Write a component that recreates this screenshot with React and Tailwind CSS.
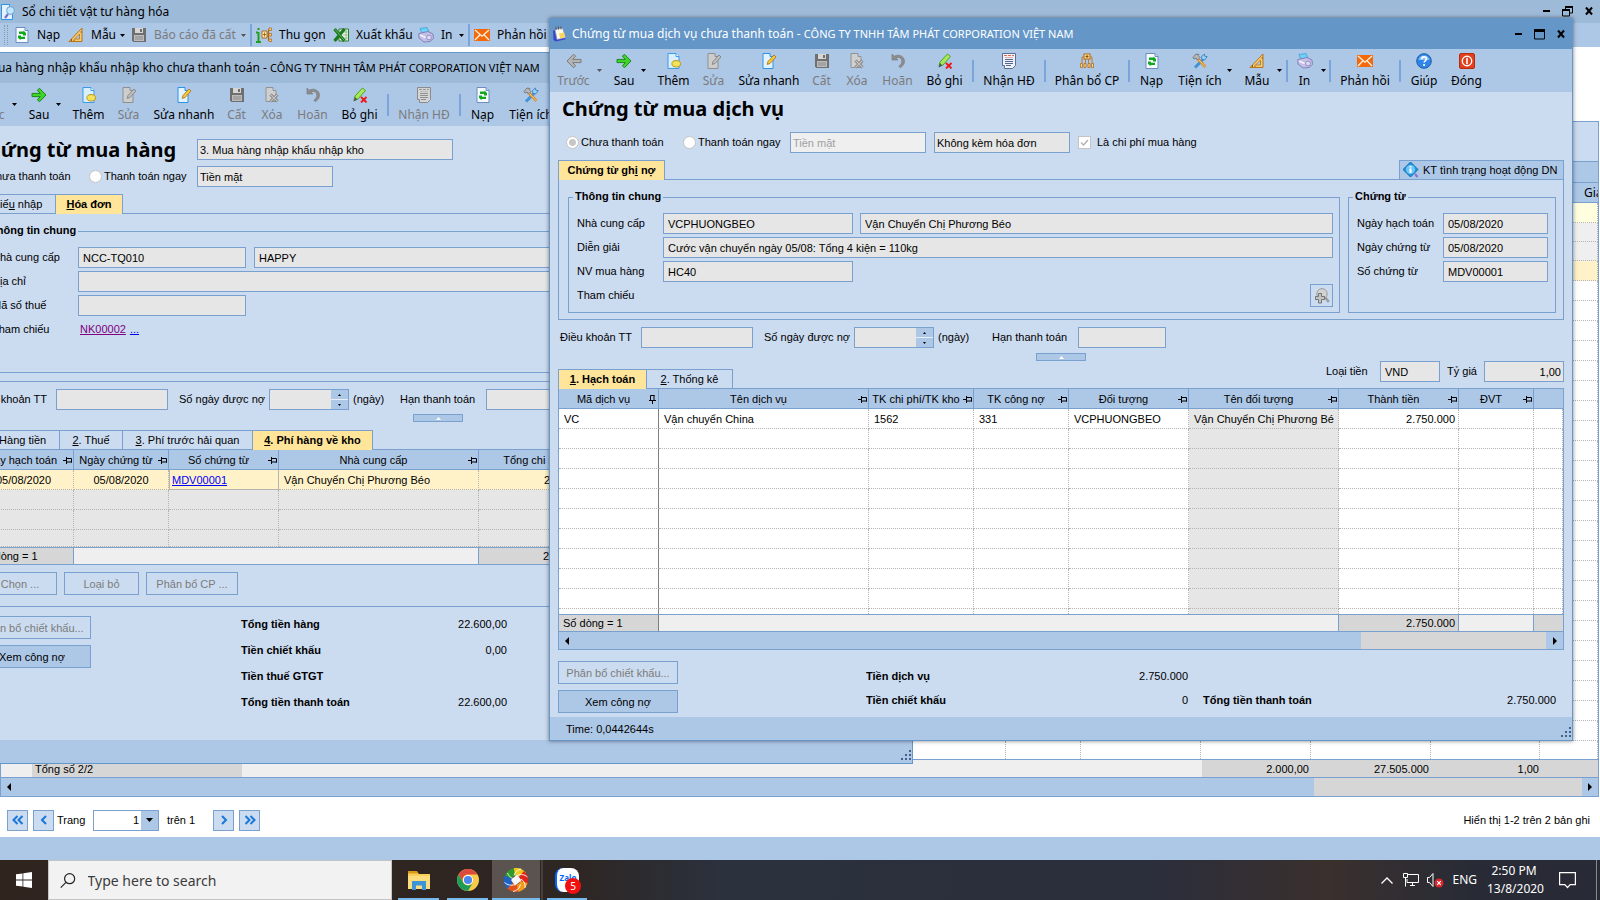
import React from "react";

const UI = "font-['Noto_Sans','Open_Sans',sans-serif]";
const BODY = "font-['Liberation_Sans',Arial,sans-serif]";

/* ---------- icons ---------- */

function Svg({ size = 16, children }) {
  return (
    <svg width={size} height={size} viewBox="0 0 16 16" aria-hidden="true" className="shrink-0">
      {children}
    </svg>
  );
}

const Caret = ({ muted }) => (
  <svg width="5" height="3" viewBox="0 0 5 3" aria-hidden="true" className="shrink-0">
    <path d="M0 0h5L2.500 3z" fill={muted ? "#555" : "#000"} />
  </svg>
);

const ArrowLeft = () => (
  <Svg>
    <path d="M7.600 1.200 1 8l6.600 6.800 2-2L6.700 9.600H15V6.400H6.700l2.900-3.200z" fill="#b4b4b4" stroke="#7c7c7c" strokeLinejoin="round" />
  </Svg>
);
const ArrowRight = () => (
  <Svg>
    <path d="M8.400 1.200 15 8l-6.600 6.800-2-2 2.900-3.200H1V6.400h8.300L6.400 3.200z" fill="#3fd32c" stroke="#1c8a14" strokeLinejoin="round" />
  </Svg>
);
const PageAdd = () => (
  <Svg>
    <path d="M2 .5h8l3 3v12H2z" fill="#d9efff" stroke="#3d9be6" />
    <path d="M10 .5v3h3" fill="#fff" stroke="#3d9be6" />
    <path d="M10 7v7M6.500 10.500h7.500M7.500 8l5.500 5M13 8l-5.500 5" stroke="#b89a1e" strokeWidth="1.500" />
    <ellipse cx="10.200" cy="10.800" rx="4.300" ry="3.200" fill="#f4e25a" stroke="#b89a1e" />
  </Svg>
);
const PageEdit = ({ muted }) => (
  <Svg>
    <path d="M2 .5h7v3h3v12H2z" fill={muted ? "#cdcdcd" : "#e2f3ff"} stroke={muted ? "#8f8f8f" : "#2f93e4"} />
    <path d="m7 8.500 6-6.500 2 2-6 6.500-2.800.9z" fill={muted ? "#bdbdbd" : "#fbc83c"} stroke={muted ? "#858585" : "#a8781d"} strokeWidth=".9" />
  </Svg>
);
const Save = () => (
  <Svg>
    <path d="M1 1h14v14H2.500L1 13.500z" fill="#6f6f6f" />
    <path d="M4 1h8v5H4z" fill="#d6d6d6" />
    <path d="M9 2h2v3H9z" fill="#6f6f6f" />
    <path d="M3 8h10v6H3z" fill="#bcbcbc" />
    <path d="M4 10h8M4 12h8" stroke="#8b8b8b" />
  </Svg>
);
const PageDelete = () => (
  <Svg>
    <path d="M2 .5h7v3h3v11H2z" fill="#cfcfcf" stroke="#929292" />
    <path d="m6.500 7.500 7 7M13.500 7.500l-7 7" stroke="#7d7d7d" strokeWidth="3" />
    <path d="m6.500 7.500 7 7M13.500 7.500l-7 7" stroke="#c4c4c4" strokeWidth="1.200" />
  </Svg>
);
const Undo = () => (
  <Svg>
    <path d="M2 1v6h6L5.800 5c3-1.500 6 .3 6 3.300 0 2-1 3.400-3 4.900l1.600 1.600C13 13 14.500 11 14.500 8.300c0-5-5.700-7.800-10.500-5z" fill="#8d8d8d" stroke="#777" strokeWidth=".6" />
  </Svg>
);
const Unpost = () => (
  <Svg>
    <path d="M2 13.500 3 9l7.500-8 3 2.500L6 12z" fill="#a5e85a" stroke="#4da51d" />
    <path d="M1.500 14.500 3 10l2.500 2.500z" fill="#555" />
    <path d="m9 10 5.500 5.500M14.500 10 9 15.500" stroke="#f01414" strokeWidth="1.800" />
  </Svg>
);
const Invoice = ({ muted }) => (
  <Svg>
    <path d="M1.500.5h13v12l-3 3h-8v-3h-2z" fill={muted ? "#d5d5d5" : "#eef3fb"} stroke={muted ? "#8b8b8b" : "#5b6f95"} />
    <path d="M3 2.500h10" stroke={muted ? "#999" : "#e2664f"} strokeDasharray="3 1" />
    <path d="M4 4.500h8" stroke={muted ? "#bbb" : "#f0a595"} />
    <path d="M4 6.500h8M4 8.500h8M4 10.500h8M5 12.500h5" stroke={muted ? "#8f8f8f" : "#52678f"} />
  </Svg>
);
const Allocate = () => (
  <Svg>
    <rect x="5" y="1" width="6" height="5" fill="#ffe08a" stroke="#b0691c" />
    <path d="M8 2v3M6.500 3.500h3" stroke="#8a4d10" />
    <path d="M5 4H3v6M11 4h2v6M6.500 6v4M9.500 6v4" fill="none" stroke="#c47a2b" />
    <path d="M1.500 10.500h2v4h-2zM5 10.500h2v4H5zM9 10.500h2v4H9zM12.500 10.500h2v4h-2z" fill="#fbd98e" stroke="#b0691c" strokeWidth=".8" />
  </Svg>
);
const Refresh = () => (
  <Svg>
    <path d="M2 .5h9l3 3v12H2z" fill="#f5fbff" stroke="#6d8dbd" />
    <path d="M11 .5v3h3" fill="#c6dbf4" stroke="#6d8dbd" />
    <path d="M5 4.500h4.500V3.500L12 6v2.500H9V7H5zM11 12H6.500v1.200L4 10.700V8.500h3v1.300h4z" fill="#11a81c" />
  </Svg>
);
const Tools = () => (
  <Svg>
    <path d="m3 14.500 8-8" stroke="#3f93d8" strokeWidth="3" />
    <path d="M10 6.500 9.500 3.500l3-2.500.3 2.300 2.400.3-2.200 3.200z" fill="#9bd1f7" stroke="#2d7ab8" strokeWidth=".8" />
    <path d="m5 5 8.500 9" stroke="#d28a2c" strokeWidth="2.600" />
    <path d="m5.500 5.500 8 8.500" stroke="#f8cf7c" />
    <path d="M1 4.500 4 1l3 .5-.8 1L8 4.500 5.500 7 4 5 2 6z" fill="#b9b9b9" stroke="#6a6a6a" strokeWidth=".8" />
  </Svg>
);
const SetSquare = () => (
  <Svg>
    <path d="M14 1v13.500H1z" fill="#f9c86a" stroke="#b5761b" strokeLinejoin="round" />
    <path d="M11.500 7v5H6.500z" fill="#adc7e7" stroke="#b5761b" strokeWidth=".8" />
    <path d="M3.500 14v-2M6 14v-1.500M12.500 5H14" stroke="#8a5710" />
  </Svg>
);
const Printer = () => (
  <Svg>
    <path d="M2 1.500 9 .5l2 4.800-7 1z" fill="#6fd0f8" stroke="#3aa1d6" strokeWidth=".8" />
    <path d="M.8 6.500 10 4.500l5 2.500.5 4.500-3.500 3L6 15l-5-4z" fill="#c3bfe6" stroke="#7d7ab5" strokeWidth=".9" />
    <path d="m2 8 5.500 2.500" stroke="#f3f2ff" strokeWidth="1.500" />
    <circle cx="11" cy="10.500" r="2.400" fill="#dedcf5" stroke="#8582bb" strokeWidth=".8" />
  </Svg>
);
const Mail = () => (
  <Svg>
    <rect x="0" y="2" width="16" height="12" fill="#f4690b" />
    <path d="m1 3 7 6.200L15 3M1 13l5-5.300M15 13l-5-5.300" fill="none" stroke="#fff2df" strokeWidth="1.300" />
  </Svg>
);
const Help = () => (
  <Svg>
    <circle cx="8" cy="8" r="7.300" fill="#2f86e8" stroke="#1c5ea8" />
    <path d="M2.500 7a5.600 5.600 0 0 1 11 0z" fill="#7fbcf8" />
    <path d="M5.800 6.200C5.800 3 10.400 3.200 10.400 6c0 1.800-2.300 1.800-2.300 3.600" fill="none" stroke="#fff" strokeWidth="1.600" />
    <circle cx="8.100" cy="12" r="1.100" fill="#fff" />
  </Svg>
);
const Power = () => (
  <Svg>
    <rect x=".5" y=".5" width="15" height="15" rx="1.500" fill="#e2401c" stroke="#b52c10" />
    <circle cx="8" cy="8" r="4.700" fill="none" stroke="#fff" strokeWidth="1.400" />
    <path d="M8 5v6" stroke="#fff" strokeWidth="1.600" />
  </Svg>
);
const Collapse = () => (
  <Svg>
    <path d="M2.500 1v2M2.500 5v10M0 15h5M0 5.500h2" stroke="#1fa01f" strokeWidth="2" />
    <path d="M6 4h5v7H6z" fill="#ffe9ac" stroke="#b0691c" />
    <path d="M8.500 5.500v4M7 7.500h3M11 6h2M11 9h2M12.500 2v12" stroke="#b0691c" />
    <path d="M13 1h2.500v2.500H13zM13 6.500h2.500V9H13zM13 12h2.500v2.500H13z" fill="#fbd98e" stroke="#b0691c" strokeWidth=".8" />
  </Svg>
);
const Excel = () => (
  <Svg>
    <path d="M6 2h9.500v12H6z" fill="#eef6ec" stroke="#2a7d2c" />
    <path d="M10 5h5M10 8h5M10 11h5M13 2v12" stroke="#7db57e" strokeWidth=".8" />
    <path d="m1.500 2 10 12M11.500 2l-10 12" stroke="#1c7a20" strokeWidth="3.200" />
    <path d="m2 2.200 9.500 11.500" stroke="#6cc06e" strokeWidth=".8" />
  </Svg>
);
const Report = () => (
  <Svg>
    <path d="M1.500.5h8v3h3v12h-11z" fill="#e2f3ff" stroke="#2f93e4" />
    <path d="m5 14 3-4" stroke="#7b6fc4" strokeWidth="2.200" />
    <circle cx="10.500" cy="6.500" r="3.900" fill="#bfe6fb" stroke="#6b9fd4" />
  </Svg>
);
const Notepad = () => (
  <Svg>
    <path d="M1 4.500 3.500 4l2 9 8-1.500v1.800L4 15.500 1.500 14z" fill="#3d46c8" />
    <path d="m3 3.500 7.500-1.500 3 9.500-8.500 2z" fill="#fffbe4" stroke="#8c95d8" strokeWidth=".7" />
    <path d="m7 7.500 5-1 1.300 4.500-5 1.400z" fill="#f9d65c" />
    <path d="M4 .8v3M6.500.6v3M9 .4v3" stroke="#555" />
  </Svg>
);
const Magnify = () => (
  <Svg>
    <circle cx="8" cy="5.800" r="5.200" fill="#d2d2d2" stroke="#9c9c9c" />
    <path d="m11.300 9.500 3.500 4.500" stroke="#9c9c9c" strokeWidth="2.600" />
    <path d="M4.500 5.500h3v3h3v3h-3v3.500h-3v-3.500H1.500v-3h3z" fill="#c4c4c4" stroke="#6b6b6b" strokeWidth=".9" />
  </Svg>
);
const Company = () => (
  <Svg>
    <path d="m7.500 0 7.500 7.500L7.500 15 0 7.500z" fill="#1f93dd" stroke="#0f6db0" />
    <circle cx="7.500" cy="7.500" r="4.600" fill="#6cc6f7" />
    <path d="M7.500 4v1.500M7.500 6.500V11" stroke="#fff" strokeWidth="2" />
    <path d="m12 12 2.500 3" stroke="#8b6fd0" strokeWidth="2" />
  </Svg>
);
const Pin = ({ vertical }) => (
  <svg width="9" height="9" viewBox="0 0 9 9" aria-hidden="true" className={vertical ? "shrink-0 -rotate-90" : "shrink-0"}>
    <path d="M0 4.500h3M3.500 1v7M4 2.500h4.500v4M4 6h5" fill="none" stroke="#000" />
  </svg>
);
const TriLeft = () => (
  <svg width="4" height="8" viewBox="0 0 4 8" aria-hidden="true"><path d="M4 0v8L0 4z" /></svg>
);
const TriRight = () => (
  <svg width="4" height="8" viewBox="0 0 4 8" aria-hidden="true"><path d="M0 0v8l4-4z" /></svg>
);
const Grip = () => (
  <svg width="12" height="12" viewBox="0 0 12 12" aria-hidden="true" className="absolute right-0 bottom-px">
    <path d="M9 0h2v2H9zM5 4h2v2H5zM9 4h2v2H9zM1 8h2v2H1zM5 8h2v2H5zM9 8h2v2H9z" fill="#42618f" />
  </svg>
);

/* ---------- shared controls ---------- */

const field = "h-[21px] min-w-0 border border-[#7aa0d0] bg-[#e6e6e6] px-1 text-[11px] text-black outline-none";

function Field({ label, value = "", className = "", align = "" }) {
  return <input aria-label={label} readOnly defaultValue={value} className={`${field} ${align} ${className}`} />;
}

function Radio({ name, label, checked, disabled }) {
  return (
    <label className="flex items-center gap-0.5 whitespace-nowrap">
      <input
        type="radio"
        name={name}
        defaultChecked={checked}
        disabled={disabled}
        className="size-[13px] shrink-0 appearance-none rounded-full border border-[#c4c4c4] bg-white checked:bg-[radial-gradient(circle,#c6c6c6_3px,#fff_4px)]"
      />
      {label}
    </label>
  );
}

function Tool({ icon, label, muted, className }) {
  return (
    <button type="button" className={`flex h-full shrink-0 flex-col items-center pt-1 text-[12px] leading-4 whitespace-nowrap ${muted ? "text-[#7b7b7b]" : "text-black"} ${className}`}>
      {icon}
      <span className="mt-1">{label}</span>
    </button>
  );
}
const Drop = ({ label, muted, w = "w-[10px]" }) => (
  <button type="button" aria-label={label} className={`flex h-full shrink-0 items-center ${w}`}>
    <Caret muted={muted} />
  </button>
);
const Sep = () => <span className="h-[22px] w-0.5 shrink-0 bg-[#7ba5da]" />;

function VoucherTools({ full }) {
  return (
    <div className={`flex h-[43px] items-center overflow-hidden bg-[#adc7e7] ${UI}`}>
      <Tool icon={<ArrowLeft />} label="Trước" muted className="w-[47px]" />
      <Drop label="Chọn chứng từ trước" muted={full} />
      <Tool icon={<ArrowRight />} label="Sau" className="w-[34px]" />
      <Drop label="Chọn chứng từ sau" />
      <Tool icon={<PageAdd />} label="Thêm" className="w-[45px]" />
      <Tool icon={<PageEdit muted />} label="Sửa" muted className="w-[35px]" />
      <Tool icon={<PageEdit />} label="Sửa nhanh" className="w-[76px]" />
      <Tool icon={<Save />} label="Cất" muted className="w-[29px]" />
      <Tool icon={<PageDelete />} label="Xóa" muted className="w-[42px]" />
      <Tool icon={<Undo />} label="Hoãn" muted className="w-[39px]" />
      <Tool icon={<Unpost />} label="Bỏ ghi" className="w-[55px]" />
      <Sep />
      <Tool icon={<Invoice muted={!full} />} label="Nhận HĐ" muted={!full} className="w-[70px]" />
      <Sep />
      {full && <Tool icon={<Allocate />} label="Phân bổ CP" className="w-[82px]" />}
      {full && <Sep />}
      <Tool icon={<Refresh />} label="Nạp" className="w-[43px]" />
      <Tool icon={<Tools />} label="Tiện ích" className="w-[54px]" />
      {full && (
        <>
          <Drop label="Chọn tiện ích" />
          <Tool icon={<SetSquare />} label="Mẫu" className="w-[40px]" />
          <Drop label="Chọn mẫu" w="w-[9px]" />
          <Sep />
          <Tool icon={<Printer />} label="In" className="w-[33px]" />
          <Drop label="Chọn mẫu in" w="w-[8px]" />
          <Sep />
          <Tool icon={<Mail />} label="Phản hồi" className="w-[68px]" />
          <Sep />
          <Tool icon={<Help />} label="Giúp" className="w-[46px]" />
          <Tool icon={<Power />} label="Đóng" className="w-[39px]" />
        </>
      )}
    </div>
  );
}

const CompanyName = () => <span className="text-[11px]">CÔNG TY TNHH TÂM PHÁT CORPORATION VIỆT NAM</span>;

function Group({ title, className = "", children }) {
  return (
    <fieldset className={`min-w-0 border border-[#7aa0d0] px-2 pt-2 ${className}`}>
      <legend className="-ml-1 px-0.5 pb-0.5 text-[11px] leading-[14px] font-bold">{title}</legend>
      {children}
    </fieldset>
  );
}

function PaymentTerms({ dueGap }) {
  return (
    <div className="mt-[7px] flex h-[21px] items-center pl-0.5 whitespace-nowrap">
      <label className="flex items-center"><span className="w-[81px]">Điều khoản TT</span><input readOnly className={`${field} w-[112px]`} /></label>
      <label className="ml-[11px] flex items-center"><span className="w-[90px]">Số ngày được nợ</span><input readOnly className={`${field} w-[62px] border-r-0`} /></label>
      <span className="flex h-[21px] w-[18px] flex-col gap-px border border-l-0 border-[#7aa0d0] bg-[#e8eff8]">
        <button type="button" aria-label="Tăng số ngày" className="flex flex-1 items-center justify-center bg-[#adc7e7]">
          <svg width="3" height="2" viewBox="0 0 3 2"><path d="M0 2h3L1.500 0z" /></svg>
        </button>
        <button type="button" aria-label="Giảm số ngày" className="flex flex-1 items-center justify-center bg-[#adc7e7]">
          <svg width="3" height="2" viewBox="0 0 3 2"><path d="M0 0h3L1.500 2z" /></svg>
        </button>
      </span>
      <span className={`pl-1 ${dueGap}`}>(ngày)</span>
      <label className="flex items-center"><span className="w-[86px]">Hạn thanh toán</span><input readOnly className={`${field} w-[88px]`} /></label>
    </div>
  );
}

const CollapseBar = ({ className }) => (
  <button type="button" aria-label="Thu gọn vùng thông tin" className={`flex h-2 w-[50px] items-center justify-center border border-[#7aa0d0] bg-[#adc7e7] ${className}`}>
    <svg width="5" height="3" viewBox="0 0 5 3"><path d="M0 3h5L2.500 0z" fill="#fff" /></svg>
  </button>
);

function Tab({ k, label, active, className }) {
  return (
    <button
      type="button"
      role="tab"
      aria-selected={!!active}
      className={`relative h-5 shrink-0 border border-[#7aa0d0] whitespace-nowrap not-first:border-l-0 ${active ? "z-10 border-b-0 bg-[#ffe599] font-bold" : "bg-[#cbdbf0]"} ${className}`}
    >
      {k && <u>{k}</u>}
      {label}
    </button>
  );
}

const btn = "flex h-[23px] items-center justify-center border border-[#7aa0d0] pt-px whitespace-nowrap";

function Th({ children, vertical, pin = true }) {
  return (
    <th className="h-5 overflow-hidden border-r border-b border-[#7aa0d0] bg-[#adc7e7] px-0 pt-px pb-0 leading-4 font-normal">
      <span className="flex items-center pr-px whitespace-nowrap">
        <span className="flex-1 text-center">{children}</span>
        {pin && <Pin vertical={vertical} />}
      </span>
    </th>
  );
}

const dotted = "overflow-hidden border-r border-b border-dotted border-[#b4b4b4] px-[5px] pt-px pb-0 leading-4 whitespace-nowrap";

function WindowButtons({ restored }) {
  return (
    <div className="ml-auto flex shrink-0 items-center gap-3">
      <button type="button" aria-label="Thu nhỏ"><svg width="7" height="11" viewBox="0 0 7 11"><path d="M0 4h7v2H0z" /></svg></button>
      <button type="button" aria-label="Phóng to">
        {restored ? (
          <svg width="11" height="11" viewBox="0 0 11 11"><path d="M3.500 3V1h7v6H8M.5 4h7v6h-7z" fill="none" stroke="#000" /><path d="M3 0h8v2H3zM0 3h8v2H0z" /></svg>
        ) : (
          <svg width="11" height="11" viewBox="0 0 11 11"><path d="M.5 1h10v9H.5z" fill="none" stroke="#000" /><path d="M0 0h11v3H0z" /></svg>
        )}
      </button>
      <button type="button" aria-label="Đóng cửa sổ"><svg width="8" height="11" viewBox="0 0 8 11"><path d="m1 1.500 6 7M7 1.500l-6 7" stroke="#000" strokeWidth="2" /></svg></button>
    </div>
  );
}

/* ---------- item ledger, fills the desktop ---------- */

const LEDGER_COLS = ["w-[1005px]", "w-[75px]", "w-[120px]", "w-[110px]", "w-[120px]", "w-[109px]", "w-auto"];

function LedgerTool({ icon, label, muted, className }) {
  return (
    <button type="button" className={`flex shrink-0 items-center gap-[7px] whitespace-nowrap ${muted ? "text-[#7b7b7b]" : ""} ${className}`}>
      {icon}
      {label}
    </button>
  );
}

function LedgerRow({ className = "h-5", cell = "" }) {
  return (
    <tr className={className}>
      {LEDGER_COLS.map((c, i) => (
        <td key={i} className={`border-r border-b border-dotted border-[#b4b4b4] p-0 ${cell}`} />
      ))}
    </tr>
  );
}

function Ledger() {
  return (
    <main className="flex min-h-0 flex-1 flex-col bg-white">
      <header className={`flex h-[23px] shrink-0 items-center bg-[#9dbad9] pr-[7px] text-[12px] ${UI}`}>
        <Report />
        <span className="ml-1.5">Sổ chi tiết vật tư hàng hóa</span>
        <WindowButtons restored />
      </header>
      <div className={`flex h-6 shrink-0 items-center bg-[#adc7e7] text-[12px] ${UI}`}>
        <span className="ml-1 h-5 w-1 border-x border-dotted border-[#8797ad]" />
        <LedgerTool icon={<Refresh />} label="Nạp" className="ml-1.5 w-[54px]" />
        <LedgerTool icon={<SetSquare />} label="Mẫu" className="w-[52px]" />
        <Drop label="Chọn mẫu" w="w-[11px]" />
        <LedgerTool icon={<Save />} label="Báo cáo đã cất" muted className="w-[110px]" />
        <Drop label="Chọn báo cáo" muted w="w-[9px]" />
        <Sep />
        <LedgerTool icon={<Collapse />} label="Thu gọn" className="ml-1 w-[77px]" />
        <LedgerTool icon={<Excel />} label="Xuất khẩu" className="w-[85px]" />
        <LedgerTool icon={<Printer />} label="In" className="w-[41px]" />
        <Drop label="Chọn mẫu in" w="w-[9px]" />
        <Sep />
        <LedgerTool icon={<Mail />} label="Phản hồi" className="ml-1" />
      </div>

      <div className="mt-[74px] mr-px flex min-h-0 flex-1 flex-col overflow-hidden border border-[#7aa0d0]">
        <div className="h-10 shrink-0 border-b border-[#7aa0d0] bg-[#cbdbf0]" />
        <div className="min-h-0 flex-1 overflow-hidden">
          <table className="w-full table-fixed border-separate border-spacing-0 text-[11px]">
            <colgroup>
              {LEDGER_COLS.map((c, i) => (
                <col key={i} className={c} />
              ))}
            </colgroup>
            <thead>
              <tr className="h-[21px]"><th colSpan={7} className="border-b border-[#7aa0d0] bg-[#adc7e7] p-0" /></tr>
              <tr className="h-5">
                <th colSpan={6} className="border-b border-[#7aa0d0] bg-[#adc7e7] p-0" />
                <th className={`overflow-hidden border-b border-[#7aa0d0] bg-[#adc7e7] py-0 pr-0 pl-11 text-left text-[12px] leading-4 font-normal whitespace-nowrap ${UI}`}>Giá</th>
              </tr>
            </thead>
            <tbody>
              <LedgerRow cell="bg-[#ffffdf]" />
              <LedgerRow className="h-[19px]" cell="bg-[#efefef]" />
              <LedgerRow className="h-[19px]" cell="bg-[#efefef]" />
              <LedgerRow cell="bg-[#fff2c8]" />
              {Array.from({ length: 24 }, (_, i) => (
                <LedgerRow key={i} />
              ))}
            </tbody>
          </table>
        </div>
        <div className="flex h-[19px] shrink-0 items-center border-y border-[#7aa0d0] bg-[#efefef] text-[11px]">
          <span className="ml-[31px] h-full w-[210px] bg-[#d6d6d6] pl-[3px] leading-[18px]">Tổng số 2/2</span>
          <span className="ml-auto flex h-full w-[396px] items-center bg-[#d6d6d6] pt-px text-right">
            <span className="w-[107px]">2.000,00</span>
            <span className="w-[120px]">27.505.000</span>
            <span className="w-[110px]">1,00</span>
          </span>
        </div>
        <div className="flex h-[18px] shrink-0 items-center bg-[#adc7e7]">
          <button type="button" aria-label="Cuộn trái" className="pl-1.5"><TriLeft /></button>
          <span className="ml-auto h-full w-[268px] bg-[#d6d6d6]" />
          <button type="button" aria-label="Cuộn phải" className="flex w-4 justify-center"><TriRight /></button>
        </div>
      </div>

      <nav className="flex h-10 shrink-0 items-center pt-1.5 pr-2.5 pl-[7px] text-[11px]">
        <PageButton label="Trang đầu" d="M7.500 3l-4 4 4 4M12.500 3l-4 4 4 4" />
        <PageButton label="Trang trước" d="M10 3 6 7l4 4" className="ml-[5px]" />
        <label className="ml-[3px] flex items-center">
          <span className="w-9">Trang</span>
          <span className="relative flex">
            <select className="h-[21px] w-[66px] appearance-none border border-[#7aa0d0] bg-white pr-[19px] text-right text-[11px] [text-align-last:right]">
              <option>1</option>
            </select>
            <span className="pointer-events-none absolute top-px right-px flex h-[19px] w-[17px] items-center justify-center bg-[#adc7e7]">
              <svg width="7" height="4" viewBox="0 0 7 4"><path d="M0 0h7L3.500 4z" /></svg>
            </span>
          </span>
        </label>
        <span className="ml-2 w-[46px]">trên 1</span>
        <PageButton label="Trang sau" d="m6 3 4 4-4 4" />
        <PageButton label="Trang cuối" d="m3.500 3 4 4-4 4M8.500 3l4 4-4 4" className="ml-[5px]" />
        <span className="ml-auto">Hiển thị 1-2 trên 2 bản ghi</span>
      </nav>
      <div className="h-[23px] shrink-0 bg-[#adc7e7]" />
    </main>
  );
}

function PageButton({ label, d, className = "" }) {
  return (
    <button type="button" aria-label={label} className={`flex size-[21px] items-center justify-center border border-[#7aa0d0] bg-[#cbdbf0] ${className}`}>
      <svg width="16" height="14" viewBox="0 0 16 14"><path d={d} fill="none" stroke="#1877d8" strokeWidth="2" /></svg>
    </button>
  );
}

/* ---------- import purchase voucher ---------- */

function ImportWindow() {
  return (
    <section className="absolute top-[52px] -left-9 w-[949px] border border-[#6496c8] bg-[#cbdbf0]">
      <header className={`flex h-[30px] items-center bg-[#9dbad9] pl-[22px] text-[12px] whitespace-nowrap ${UI}`}>
        <span>Mua hàng nhập khẩu nhập kho chưa thanh toán - <CompanyName /></span>
      </header>
      <VoucherTools />
      <div className="px-2 text-[11px]">
        <div className="mt-[13px] flex h-[21px] items-center">
          <h2 className={`w-[224px] pl-0.5 text-[20px] leading-7 font-bold whitespace-nowrap ${UI}`}>Chứng từ mua hàng</h2>
          <Field label="Loại chứng từ" value="3. Mua hàng nhập khẩu nhập kho" className="w-[256px] pl-0.5" />
        </div>
        <div className="mt-1.5 flex h-[21px] items-center">
          <span className="w-[116px]"><Radio name="pay-a" label="Chưa thanh toán" checked disabled /></span>
          <span className="w-[108px]"><Radio name="pay-a" label="Thanh toán ngay" disabled /></span>
          <Field label="Phương thức thanh toán" value="Tiền mặt" className="w-[136px] pl-0.5" />
        </div>
        <div role="tablist" className="relative mt-[7px] -mb-px flex">
          <Tab label={<>Phiế<u>u</u> nhập</>} className="w-[83px]" />
          <Tab k="H" label="óa đơn" active className="w-[67px]" />
        </div>
        <div className="border border-[#7aa0d0] px-[9px] pt-[9px] pb-2">
          <Group title="Thông tin chung" className="pb-[31px]">
            <div className="grid grid-cols-[86px_168px_1fr] items-center gap-y-[3px]">
              <span>Nhà cung cấp</span>
              <Field label="Mã nhà cung cấp" value="NCC-TQ010" />
              <Field label="Tên nhà cung cấp" value="HAPPY" className="ml-2" />
              <span>Địa chỉ</span>
              <Field label="Địa chỉ" className="col-span-2" />
              <span>Mã số thuế</span>
              <Field label="Mã số thuế" />
            </div>
            <div className="mt-0.5 flex h-[23px] items-center">
              <span className="w-[88px]">Tham chiếu</span>
              <a href="#nk00002" className="text-[#800080] underline">NK00002</a>
              <a href="#more" className="ml-1 text-[#0000ee] underline">...</a>
            </div>
          </Group>
        </div>
        <PaymentTerms dueGap="w-[51px]" />
        <CollapseBar className="mt-1 ml-[440px]" />
        <div role="tablist" className="relative mt-2 -mb-px flex">
          <Tab k="1" label=". Hàng tiền" className="w-[87px]" />
          <Tab k="2" label=". Thuế" className="w-[63px]" />
          <Tab k="3" label=". Phí trước hải quan" className="w-[130px]" />
          <Tab k="4" label=". Phí hàng về kho" active className="w-[120px]" />
        </div>
        <div className="overflow-hidden border border-[#7aa0d0]">
          <table className="w-full table-fixed border-separate border-spacing-0">
            <colgroup>
              <col className="w-[100px]" /><col className="w-[95px]" /><col className="w-[110px]" /><col className="w-[200px]" /><col className="w-[120px]" /><col />
            </colgroup>
            <thead>
              <tr><Th>Ngày hạch toán</Th><Th>Ngày chứng từ</Th><Th>Số chứng từ</Th><Th>Nhà cung cấp</Th><Th>Tổng chi phí</Th><Th /></tr>
            </thead>
            <tbody>
              <tr className="h-5 bg-[#fff2c8]">
                <td className={`${dotted} text-center`}>05/08/2020</td>
                <td className={`${dotted} text-center`}>05/08/2020</td>
                <td className="border border-t-0 border-[#b4b4b4] px-0.5 pt-px pb-0 leading-4"><a href="#mdv00001" className="text-[#0000ff] underline">MDV00001</a></td>
                <td className={dotted}>Vận Chuyển Chị Phương Béo</td>
                <td className={`${dotted} text-right`}>2.750.000</td>
                <td className={dotted} />
              </tr>
              {["h-5", "h-5", "h-[17px]"].map((h, i) => (
                <tr key={i} className={`${h} bg-[#e6e6e6]`}>
                  {[0, 1, 2, 3, 4, 5].map((c) => <td key={c} className={dotted} />)}
                </tr>
              ))}
            </tbody>
            <tfoot>
              <tr className="h-[17px] bg-[#efefef] leading-4">
                <td className="border-t border-r border-[#7aa0d0] bg-[#d6d6d6] px-1 py-0">Số dòng = 1</td>
                <td colSpan={3} className="border-t border-r border-[#7aa0d0] p-0" />
                <td className="border-t border-r border-[#7aa0d0] bg-[#d6d6d6] px-1.5 py-0 text-right">2.750.000</td>
                <td className="border-t border-[#7aa0d0] p-0" />
              </tr>
            </tfoot>
          </table>
        </div>
        <div className="mt-[7px] flex gap-[7px] text-[#7b7b7b]">
          <button type="button" className={`${btn} w-[84px] pl-2.5`}>Chọn ...</button>
          <button type="button" className={`${btn} w-[75px]`}>Loại bỏ</button>
          <button type="button" className={`${btn} w-[92px]`}>Phân bổ CP ...</button>
        </div>
        <div className="mt-[11px] flex h-[134px] border-t border-[#7aa0d0] pt-1">
          <div className="flex w-[268px] flex-col gap-1.5 pt-[5px]">
            <button type="button" className={`${btn} w-[118px] text-[#7b7b7b]`}>Phân bổ chiết khấu...</button>
            <button type="button" className={`${btn} w-[118px] bg-[#adc7e7]`}>Xem công nợ</button>
          </div>
          <dl className="grid w-[266px] auto-rows-[26px] grid-cols-2 items-center">
            <dt className="font-bold">Tổng tiền hàng</dt><dd className="text-right">22.600,00</dd>
            <dt className="font-bold">Tiền chiết khấu</dt><dd className="text-right">0,00</dd>
            <dt className="font-bold">Tiền thuế GTGT</dt><dd />
            <dt className="font-bold">Tổng tiền thanh toán</dt><dd className="text-right">22.600,00</dd>
          </dl>
        </div>
      </div>
      <footer className="relative h-[23px] bg-[#adc7e7]"><Grip /></footer>
    </section>
  );
}

/* ---------- service purchase voucher ---------- */

function ServiceWindow() {
  const blanks = ["h-5", "h-5", "h-5", "h-5", "h-5", "h-5", "h-5", "h-5", "h-5", "h-[5px]"];
  return (
    <section className="absolute top-[18px] right-[27px] left-[549px] border border-[#6496c8] bg-[#cbdbf0] shadow-[0_0_4px_rgba(0,0,0,0.5)]">
      <header className={`flex h-[30px] items-center bg-[#6496c8] pr-[7px] pl-0.5 text-[12px] whitespace-nowrap text-white ${UI}`}>
        <Notepad />
        <span className="ml-1">Chứng từ mua dịch vụ chưa thanh toán - <CompanyName /></span>
        <WindowButtons />
      </header>
      <VoucherTools full />
      <div className="px-2 pb-1 text-[11px]">
        <h1 className={`pb-0.5 pl-1 text-[20px] leading-[34px] font-bold ${UI}`}>Chứng từ mua dịch vụ</h1>
        <div className="mt-1 flex h-[21px] items-center pl-2">
          <span className="w-[117px]"><Radio name="pay-b" label="Chưa thanh toán" checked disabled /></span>
          <span className="w-[107px]"><Radio name="pay-b" label="Thanh toán ngay" disabled /></span>
          <input aria-label="Phương thức thanh toán" disabled defaultValue="Tiền mặt" className="h-[21px] w-[136px] border border-[#7aa0d0] bg-[#efefef] px-0.5 text-[11px] text-[#a0a0a0]" />
          <Field label="Hóa đơn" value="Không kèm hóa đơn" className="ml-2 w-[136px] pl-0.5" />
          <label className="ml-2 flex items-center gap-1.5">
            <span className="relative flex">
              <input type="checkbox" defaultChecked disabled className="size-[13px] appearance-none border border-[#c4c4c4] bg-white" />
              <svg width="13" height="13" viewBox="0 0 13 13" className="absolute inset-0"><path d="m3 6.500 2.500 2.500L10 4" fill="none" stroke="#b0b0b0" strokeWidth="1.300" /></svg>
            </span>
            Là chi phí mua hàng
          </label>
        </div>
        <div className="relative mt-[7px] -mb-px flex justify-between">
          <div role="tablist" className="flex">
            <Tab label={<>Chứng từ gh<u>i</u> nợ</>} active className="w-[107px]" />
          </div>
          <button type="button" className="flex h-5 w-[165px] items-center gap-1 border border-[#7aa0d0] bg-[#adc7e7] pl-[3px] whitespace-nowrap">
            <Company />
            KT tình trạng hoạt động DN
          </button>
        </div>
        <div className="flex gap-2 border border-[#7aa0d0] pt-[9px] pr-[7px] pb-1.5 pl-[9px]">
          <Group title="Thông tin chung" className="flex-1 pr-1.5 pb-[5px]">
            <div className="grid grid-cols-[86px_190px_1fr] items-center gap-y-[3px]">
              <span>Nhà cung cấp</span>
              <Field label="Mã nhà cung cấp" value="VCPHUONGBEO" />
              <Field label="Tên nhà cung cấp" value="Vận Chuyển Chị Phương Béo" className="ml-[7px]" />
              <span>Diễn giải</span>
              <Field label="Diễn giải" value="Cước vận chuyển ngày 05/08: Tổng 4 kiện = 110kg" className="col-span-2" />
              <span>NV mua hàng</span>
              <Field label="NV mua hàng" value="HC40" />
            </div>
            <div className="mt-0.5 flex h-[23px] items-center justify-between">
              <span>Tham chiếu</span>
              <button type="button" aria-label="Tìm chứng từ tham chiếu" className="flex size-[23px] items-center justify-center border border-[#7aa0d0]"><Magnify /></button>
            </div>
          </Group>
          <Group title="Chứng từ" className="w-[208px] pr-[7px]">
            <div className="grid grid-cols-[86px_1fr] items-center gap-y-[3px] whitespace-nowrap">
              <span>Ngày hạch toán</span><Field label="Ngày hạch toán" value="05/08/2020" />
              <span>Ngày chứng từ</span><Field label="Ngày chứng từ" value="05/08/2020" />
              <span>Số chứng từ</span><Field label="Số chứng từ" value="MDV00001" />
            </div>
          </Group>
        </div>
        <PaymentTerms dueGap="w-[58px]" />
        <CollapseBar className="mt-[5px] ml-[478px]" />
        <div className="relative -mb-px flex h-7 items-start whitespace-nowrap">
          <div role="tablist" className="flex self-end">
            <Tab k="1" label=". Hạch toán" active className="w-[89px]" />
            <Tab k="2" label=". Thống kê" className="w-[86px]" />
          </div>
          <label className="ml-auto flex items-center"><span className="w-[54px]">Loại tiền</span><input readOnly defaultValue="VND" className={`${field} w-[60px]`} /></label>
          <label className="ml-[7px] flex items-center"><span className="w-[37px]">Tỷ giá</span><input readOnly defaultValue="1,00" className={`${field} w-[80px] pr-0.5 text-right`} /></label>
        </div>
        <div className="border border-[#7aa0d0] bg-white">
          <table className="w-full table-fixed border-separate border-spacing-0">
            <colgroup>
              <col className="w-[100px]" /><col className="w-[210px]" /><col className="w-[105px]" /><col className="w-[95px]" /><col className="w-[120px]" /><col className="w-[150px]" /><col className="w-[120px]" /><col className="w-[75px]" /><col />
            </colgroup>
            <thead>
              <tr>
                <Th vertical>Mã dịch vụ</Th><Th>Tên dịch vụ</Th><Th>TK chi phí/TK kho</Th><Th>TK công nợ</Th><Th>Đối tượng</Th><Th>Tên đối tượng</Th><Th>Thành tiền</Th><Th>ĐVT</Th>
                <th className="border-b border-[#7aa0d0] bg-[#adc7e7] p-0" />
              </tr>
            </thead>
            <tbody>
              <tr className="h-5">
                <td className={`${dotted} border-r-[#808080] [border-right-style:solid]`}>VC</td>
                <td className={dotted}>Vận chuyển China</td>
                <td className={dotted}>1562</td>
                <td className={dotted}>331</td>
                <td className={dotted}>VCPHUONGBEO</td>
                <td className={`${dotted} bg-[#e6e6e6]`}>Vận Chuyển Chị Phương Bé</td>
                <td className={`${dotted} pr-[3px] text-right`}>2.750.000</td>
                <td className={dotted} />
                <td className={dotted} />
              </tr>
              {blanks.map((h, i) => (
                <tr key={i} className={h}>
                  <td className={`${h === "h-5" ? dotted : "border-r p-0"} border-r-[#808080] [border-right-style:solid]`} />
                  {[1, 2, 3, 4, 5, 6, 7, 8].map((c) => (
                    <td key={c} className={`${h === "h-5" ? dotted : "border-r border-dotted border-[#b4b4b4] p-0"} ${c === 5 ? "bg-[#e6e6e6]" : ""}`} />
                  ))}
                </tr>
              ))}
            </tbody>
            <tfoot>
              <tr className="h-[18px] bg-[#efefef] leading-4">
                <td className="border-y border-r border-[#7aa0d0] border-r-[#808080] bg-[#d6d6d6] px-1 py-0">Số dòng = 1</td>
                <td colSpan={5} className="border-y border-r border-[#7aa0d0] p-0" />
                <td className="border-y border-r border-[#7aa0d0] bg-[#d6d6d6] px-[3px] py-0 text-right">2.750.000</td>
                <td className="border-y border-r border-[#7aa0d0] p-0" />
                <td className="border-y border-[#7aa0d0] bg-[#d6d6d6] p-0" />
              </tr>
            </tfoot>
          </table>
          <div className="flex h-[17px] items-center bg-[#adc7e7]">
            <button type="button" aria-label="Cuộn trái" className="pl-1.5"><TriLeft /></button>
            <span className="ml-auto h-full w-[185px] bg-[#d6d6d6]" />
            <button type="button" aria-label="Cuộn phải" className="flex w-[17px] justify-center"><TriRight /></button>
          </div>
        </div>
        <div className="mt-[11px] flex">
          <div className="flex w-[120px] flex-col gap-1.5">
            <button type="button" className={`${btn} text-[#7b7b7b]`}>Phân bổ chiết khấu...</button>
            <button type="button" className={`${btn} bg-[#adc7e7]`}>Xem công nợ</button>
          </div>
          <dl className="ml-[188px] grid w-[322px] auto-rows-[24px] grid-cols-2 items-center pt-[3px]">
            <dt className="font-bold">Tiền dịch vụ</dt><dd className="text-right">2.750.000</dd>
            <dt className="font-bold">Tiền chiết khấu</dt><dd className="text-right">0</dd>
          </dl>
          <dl className="ml-[15px] flex flex-1 items-center justify-between self-start pt-[27px] pr-2 leading-6">
            <dt className="font-bold">Tổng tiền thanh toán</dt><dd>2.750.000</dd>
          </dl>
        </div>
      </div>
      <footer className="relative flex h-[23px] items-center bg-[#adc7e7] pt-px pl-4 text-[11px]">
        Time: 0,0442644s
        <Grip />
      </footer>
    </section>
  );
}

/* ---------- taskbar ---------- */

function TaskApp({ label, active, children, className = "w-[49px]" }) {
  return (
    <button type="button" aria-label={label} className={`relative flex h-full items-center justify-center ${active ? "bg-[#5a5350]" : ""} ${className}`}>
      {children}
      <span className={`absolute bottom-0 h-0.5 bg-[#76b9ed] ${active ? "inset-x-0" : "inset-x-1"}`} />
    </button>
  );
}

function Taskbar() {
  return (
    <footer className={`flex h-10 shrink-0 items-center bg-[linear-gradient(90deg,#2f241e_0%,#2e2623_36%,#2b313d_45%,#2b2e3b_72%,#3a302d_83%,#282b36_92%)] text-white ${UI}`}>
      <button type="button" aria-label="Start" className="flex h-full w-12 items-center justify-center">
        <svg width="16" height="16" viewBox="0 0 16 16"><path d="M0 2.300 6.500 1.400v6.200H0zM7.300 1.300 16 0v7.600H7.300zM0 8.400h6.500v6.200L0 13.700zM7.300 8.400H16V16l-8.700-1.300z" fill="#fff" /></svg>
      </button>
      <label className="flex h-full w-[344px] items-center border border-[#c4c4c4] bg-[#f2f2f2] pl-[11px]">
        <svg width="17" height="17" viewBox="0 0 17 17"><circle cx="10.500" cy="6.500" r="5.500" fill="none" stroke="#222" strokeWidth="1.300" /><path d="M6.500 10.500.8 16.200" stroke="#222" strokeWidth="1.300" /></svg>
        <input placeholder="Type here to search" aria-label="Search" className="ml-3 w-full bg-transparent text-[14px] text-black outline-none placeholder:text-[#3b3b3b]" />
      </label>
      <span className="w-0.5" />
      <TaskApp label="File Explorer">
        <svg width="22" height="19" viewBox="0 0 22 19">
          <path d="M0 1h9l2 2h11v15H0z" fill="#f8cf58" />
          <path d="M0 0h9l1.500 2.500H0z" fill="#d99a14" />
          <path d="M0 5h22v13H0z" fill="#fbdc7e" />
          <path d="M4 10h14v9h-4v-4.500H8V19H4z" fill="#3d94d6" />
        </svg>
      </TaskApp>
      <TaskApp label="Chrome">
        <svg width="22" height="22" viewBox="0 0 22 22">
          <circle cx="11" cy="11" r="11" fill="#f7cb4a" />
          <path d="M1.500 5.500A11 11 0 0 1 20.500 5.500H11a5.500 5.500 0 0 0-4.800 8.200z" fill="#dc4a3d" />
          <path d="M1.500 5.500A11 11 0 0 0 11 22l4.800-8.300a5.500 5.500 0 0 1-9.500 0z" fill="#1f9d58" />
          <circle cx="11" cy="11" r="5" fill="#fff" />
          <circle cx="11" cy="11" r="4.100" fill="#4a87ee" />
        </svg>
      </TaskApp>
      <TaskApp label="MISA SME" active className="w-[48px]">
        <svg width="24" height="24" viewBox="0 0 24 24">
          <g fill="none" strokeWidth="7.500">
            <path d="M4 10A8.200 8.200 0 0 1 12 3.800" stroke="#2e9a2a" />
            <path d="M10.500 3.900A8.200 8.200 0 0 1 19 7.600" stroke="#f1c81d" />
            <path d="M17.500 5.900A8.200 8.200 0 0 1 19.200 16" stroke="#e2231a" />
            <path d="M20 14a8.200 8.200 0 0 1-8.500 6.200" stroke="#f39a1b" />
            <path d="M13.500 20A8.200 8.200 0 0 1 5 16.400" stroke="#e0531a" />
            <path d="M6 17.800A8.200 8.200 0 0 1 4.100 9" stroke="#1d62c4" />
          </g>
          <path d="M3.500 5C5.500 9 7 10.500 11 10.500M17 1c-3.500 1-6 3-7 6.500M23.500 9c-3-2.500-6.500-3.200-10-1.500M21 20c.5-4-.8-7-4-9M9 23.500c4-1 6.500-3 7.500-7M.5 14.500c3 2.500 6.500 3.500 10.500 2" fill="none" stroke="#fff" strokeWidth=".9" />
          <path d="m7 12 6-5.500 4.500 6L11 17.500z" fill="#f7f7f7" />
        </svg>
      </TaskApp>
      <span className="h-full w-[3px] border-l border-[#2e2623] bg-[#46403d]" />
      <TaskApp label="Zalo" className="w-[48px]">
        <span className="relative flex size-6 items-center justify-center rounded-[8px] border-l-2 border-[#0068ff] bg-white pb-1 text-[8px] font-bold text-[#0068ff]">
          Zalo
          <span className="absolute -right-0.5 -bottom-0.5 flex size-4 items-center justify-center rounded-full bg-[#f01010] text-[10px] font-normal text-white">5</span>
        </span>
      </TaskApp>

      <div className="ml-auto flex h-full items-center text-[12px]">
        <button type="button" aria-label="Hidden icons"><svg width="12" height="7" viewBox="0 0 12 7"><path d="M.5 6.500 6 1l5.500 5.500" fill="none" stroke="#fff" strokeWidth="1.300" /></svg></button>
        <svg width="16" height="14" viewBox="0 0 16 14" className="ml-2.5"><path d="M5 1.500h10.500v8H4V6M7 12.500h5M9.500 9.500v3M.5.500h4v4h-4zM2.500 4.500v9" fill="none" stroke="#fff" /></svg>
        <svg width="17" height="15" viewBox="0 0 17 15" className="ml-2">
          <path d="M.5 4.500h2l3.500-4v13l-3.500-4h-2z" fill="none" stroke="#fff" />
          <circle cx="12" cy="10" r="4.500" fill="#d9252b" />
          <path d="m10.200 8.200 3.600 3.600M13.800 8.200l-3.600 3.600" stroke="#fff" strokeWidth="1.200" />
        </svg>
        <span className="ml-2">ENG</span>
        <time className="ml-2.5 w-[54px] text-center leading-[18px]">2:50 PM<br />13/8/2020</time>
        <button type="button" aria-label="Notifications" className="ml-[18px]"><svg width="17" height="17" viewBox="0 0 17 17"><path d="M.6.6h15.800v12h-5.200L8.500 15.500l-2.700-2.900H.6z" fill="none" stroke="#fff" strokeWidth="1.200" /></svg></button>
        <span className="ml-5 h-full w-px bg-[#8a8a8a]" />
        <span className="w-[3px]" />
      </div>
    </footer>
  );
}

export default function App() {
  return (
    <div className={`relative flex h-screen flex-col overflow-hidden bg-white text-[11px] text-black ${BODY}`}>
      <Ledger />
      <ImportWindow />
      <ServiceWindow />
      <Taskbar />
    </div>
  );
}
